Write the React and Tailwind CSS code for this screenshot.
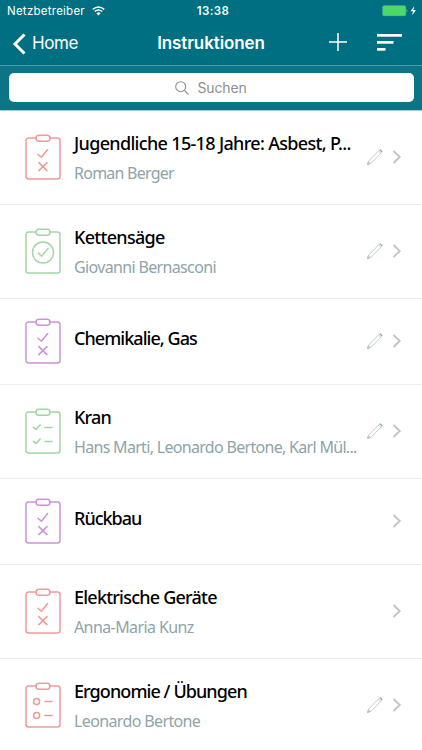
import clsx from 'clsx'

const items = [
  { title: 'Jugendliche 15-18 Jahre: Asbest, P...', titleClass: 'tracking-[-0.67px]', people: 'Roman Berger', peopleClass: 'tracking-[-0.75px]', icon: 'checkCross', color: 'text-[#ee9a9a]', editable: true },
  { title: 'Kettensäge', titleClass: 'tracking-[-0.7px]', people: 'Giovanni Bernasconi', peopleClass: 'tracking-[-0.65px]', icon: 'circleCheck', color: 'text-[#a0d6a5]', editable: true },
  { title: 'Chemikalie, Gas', titleClass: 'tracking-[-0.95px]', icon: 'checkCross', color: 'text-[#cd93d9]', editable: true },
  { title: 'Kran', titleClass: 'tracking-[-0.85px]', people: 'Hans Marti, Leonardo Bertone, Karl Mül...', peopleClass: 'tracking-[-0.69px]', icon: 'checkList', color: 'text-[#a0d6a5]', editable: true },
  { title: 'Rückbau', titleClass: 'tracking-[-1px]', icon: 'checkCross', color: 'text-[#cd93d9]', editable: false },
  { title: 'Elektrische Geräte', titleClass: 'tracking-[-0.78px]', people: 'Anna-Maria Kunz', peopleClass: 'tracking-[-0.6px]', icon: 'checkCross', color: 'text-[#ee9a9a]', editable: false },
  { title: 'Ergonomie / Übungen', titleClass: 'tracking-[-0.92px]', people: 'Leonardo Bertone', peopleClass: 'tracking-[-0.63px]', icon: 'radioList', color: 'text-[#ee9a9a]', editable: true },
]

function ClipboardIcon({ type, className }) {
  return (
    <svg width="38" height="48" viewBox="0 0 38 48" fill="none" stroke="currentColor" strokeWidth="1.5" strokeLinecap="round" strokeLinejoin="round" className={className}>
      <path d="M12 5H4.5A2.5 2.5 0 0 0 2 7.5V43.5A2.5 2.5 0 0 0 4.5 46H33.5A2.5 2.5 0 0 0 36 43.5V7.5A2.5 2.5 0 0 0 33.5 5H26" />
      <rect x="12" y="2.2" width="14" height="6" rx="3" />
      {type === 'checkCross' && (
        <path d="M14 21.2L17.4 24.3L23.7 16.5M14.8 29.6L23 37.6M23 29.6L14.8 37.6" />
      )}
      {type === 'circleCheck' && (
        <>
          <circle cx="19" cy="25.5" r="10.5" />
          <path d="M14.3 26L17.6 29.2L24 21.5" />
        </>
      )}
      {type === 'checkList' && (
        <path d="M9.3 20.3L12 22.5L16.3 17.7M9.3 34.3L12 36.5L16.3 31.7M21 20.6H28M21 34.6H28" />
      )}
      {type === 'radioList' && (
        <>
          <circle cx="12.6" cy="20.6" r="3" />
          <circle cx="12.6" cy="34.6" r="3" />
          <path d="M21 20.6H28M21 34.6H28" />
        </>
      )}
    </svg>
  )
}

function PencilIcon() {
  return (
    <svg width="18" height="18" viewBox="0 0 18 18" fill="none" stroke="#a9b9bd" strokeWidth="0.7" strokeLinejoin="round">
      <path d="M1.7 16.3L2.5 13.2L13.3 2.2Q14.3 1.3 15.5 2.3Q16.5 3.5 15.6 4.5L4.8 15.5ZM2.5 13.2L4.8 15.5M12.5 3L14.8 5.3" />
      <path d="M1.5 16.5L2.1 14.7L3.3 15.9Z" fill="#9fb0b4" />
      <path d="M14 1.9L16 3.9" stroke="#93a5a9" strokeWidth="1.2" />
    </svg>
  )
}

function StatusBar() {
  return (
    <div className="grid h-[22px] grid-cols-3 items-center pl-[7px] pr-[5px] text-[11.5px]">
      <div className="flex items-center gap-[7px]">
        <span className="pt-px tracking-[0.25px]">Netzbetreiber</span>
        <svg width="13" height="10" viewBox="0 0 13 10" fill="none" stroke="white" strokeWidth="1.4">
          <path d="M0.7 3.4Q6.5 -1.6 12.3 3.4M2.7 5.5Q6.5 2.3 10.3 5.5" />
          <path d="M4.4 7.2Q6.5 5.5 8.6 7.2L6.5 9.4Z" fill="white" stroke="none" />
        </svg>
      </div>
      <span className="pl-0.5 pt-px text-center font-semibold tracking-[0.4px]">13:38</span>
      <div className="flex items-center justify-end">
        <svg width="35" height="12" viewBox="0 0 35 12">
          <rect x="0.7" y="0.7" width="23" height="10" rx="1.5" fill="#4cd964" stroke="#7bb9a7" strokeWidth="0.5" />
          <path d="M24.6 4Q26.2 5.7 24.6 7.4Z" fill="#a5d4cf" />
          <path d="M32.2 1.2L28.5 6.3H31L30.2 10.2L34 5H31.5Z" fill="white" />
        </svg>
      </div>
    </div>
  )
}

function NavBar() {
  return (
    <div className="grid h-[43px] grid-cols-[1fr_auto_1fr] items-center pl-3 pr-5">
      <div className="flex items-center gap-[5px]">
        <svg width="15" height="22" viewBox="0 0 15 22" fill="none" stroke="white" strokeWidth="3">
          <path d="M12.5 1.5L3 11L12.5 20.5" />
        </svg>
        <span className="text-[17px] tracking-[-0.4px]">Home</span>
      </div>
      <h1 className="pl-2 text-center text-[17px] font-semibold tracking-[-0.1px]">Instruktionen</h1>
      <div className="flex items-center justify-end gap-[30px] pb-[3px]">
        <svg width="18" height="18" viewBox="0 0 18 18" stroke="white" strokeWidth="1.5">
          <path d="M9 0V18M0 9H18" />
        </svg>
        <svg width="25" height="17" viewBox="0 0 25 17" fill="white">
          <rect width="25" height="2.7" />
          <rect y="7" width="16.5" height="2.7" />
          <rect y="14" width="8.5" height="2.7" />
        </svg>
      </div>
    </div>
  )
}

function SearchBar() {
  return (
    <div className="h-[44.5px] border-t border-[#4b9ba8] bg-[#0b7586] px-[8.5px] pt-[7px]">
      <div className="flex h-[29px] items-center justify-center gap-2 rounded-[5px] bg-white text-[14px] text-[#8e8e93]">
        <svg width="14" height="14" viewBox="0 0 14 14" fill="none" stroke="currentColor" strokeWidth="1.1">
          <circle cx="5.7" cy="5.7" r="5" />
          <path d="M9.3 9.3L13.5 13.5" />
        </svg>
        <span className="tracking-[-0.15px]">Suchen</span>
      </div>
    </div>
  )
}

function InstructionRow({ item }) {
  return (
    <li
      className={clsx(
        'flex items-center border-b border-[#ececee] pl-6 pr-5',
        item.people ? 'h-[94px]' : 'h-[86px]'
      )}
    >
      <ClipboardIcon type={item.icon} className={clsx('shrink-0', item.color)} />
      <div className={clsx('ml-3 min-w-0 flex-1 whitespace-nowrap', item.people ? 'pt-px' : 'pb-[7px]')}>
        <div className={clsx('text-[18px] leading-[30px] font-medium text-black', item.titleClass)}>
          <span>{item.title}</span>
        </div>
        {item.people && (
          <div className={clsx('text-[16px] leading-[30px] text-[#8ea4a9]', item.peopleClass)}>
            <span>{item.people}</span>
          </div>
        )}
      </div>
      <div className="flex w-9 shrink-0 items-center justify-end gap-2">
        {item.editable && <PencilIcon />}
        <svg width="10" height="14" viewBox="0 0 10 14" fill="none" stroke="#c3c4c9" strokeWidth="1.9">
          <path d="M1.5 1L7.8 7L1.5 13" />
        </svg>
      </div>
    </li>
  )
}

export default function App() {
  return (
    <div className="h-[750px] w-[422px] overflow-hidden bg-white font-['Inter',sans-serif]">
      <header className="bg-[#006f81] text-white">
        <StatusBar />
        <NavBar />
        <SearchBar />
      </header>
      <ul className="border-t border-[#a5cdd4] font-['Noto_Sans',sans-serif]">
        {items.map((item) => (
          <InstructionRow key={item.title} item={item} />
        ))}
      </ul>
    </div>
  )
}
